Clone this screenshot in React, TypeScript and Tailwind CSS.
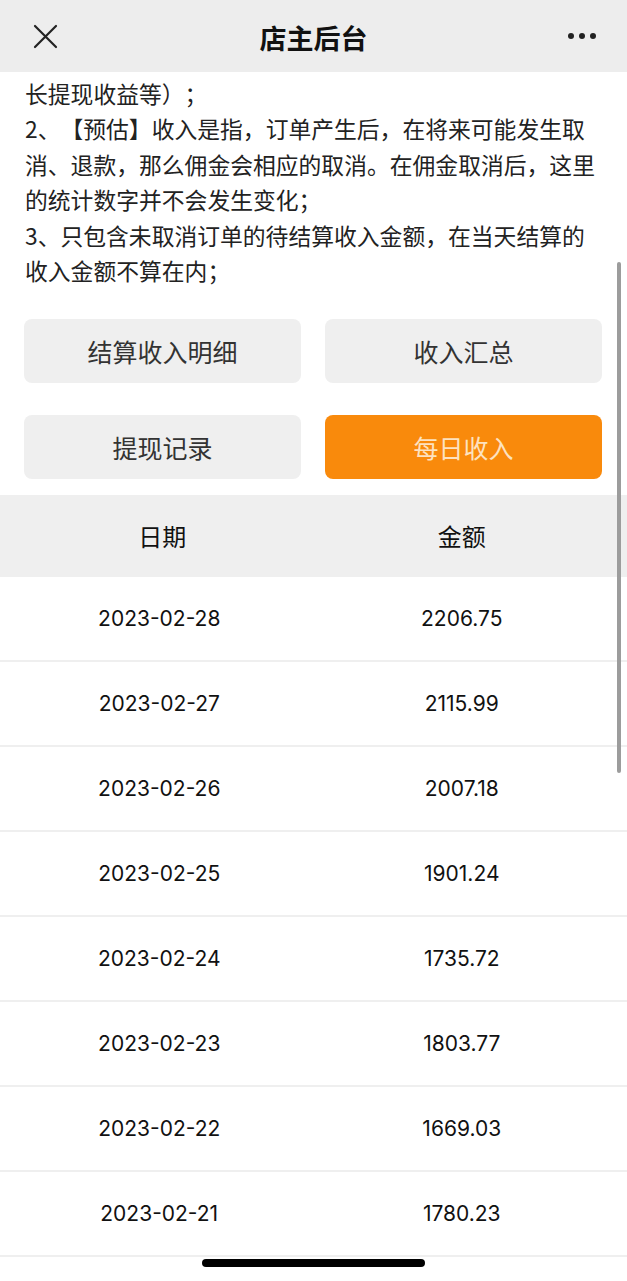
import React from "react";

const cjk = { fontFamily: '"Noto Sans CJK SC", "Noto Sans", sans-serif' };
const num = { fontFamily: 'Inter, "Noto Sans CJK SC", sans-serif' };

const rows: [string, string][] = [
  ["2023-02-28", "2206.75"],
  ["2023-02-27", "2115.99"],
  ["2023-02-26", "2007.18"],
  ["2023-02-25", "1901.24"],
  ["2023-02-24", "1735.72"],
  ["2023-02-23", "1803.77"],
  ["2023-02-22", "1669.03"],
  ["2023-02-21", "1780.23"],
];

export default function App() {
  return (
    <div className="relative w-[627px] h-[1281px] overflow-hidden bg-white" style={cjk}>
      {/* Nav bar */}
      <div className="h-[72px] bg-[#ededed] grid grid-cols-[1fr_auto_1fr] items-center">
        <div className="pl-[33px] flex items-center">
          <svg width="25" height="25" viewBox="0 0 25 25" fill="none">
            <path d="M2 2 L23 23 M23 2 L2 23" stroke="#222" strokeWidth="2.2" strokeLinecap="round" />
          </svg>
        </div>
        <div className="text-[27px] font-semibold text-[#111] leading-none pt-[2px]">店主后台</div>
        <div className="flex justify-end items-center pr-[31px] gap-[5px]">
          <span className="w-[6px] h-[6px] rounded-full bg-[#222]" />
          <span className="w-[6px] h-[6px] rounded-full bg-[#222]" />
          <span className="w-[6px] h-[6px] rounded-full bg-[#222]" />
        </div>
      </div>

      {/* Notes */}
      <div className="pt-[4px] px-[25px] text-[22.8px] leading-[35.4px] text-[#222] [text-spacing-trim:space-all]">
        <div className="whitespace-nowrap">长提现收益等）；</div>
        <div className="whitespace-nowrap">
          <span>2、</span>
          <span>【预估】</span>
          <span>收入是指，</span>
          <span>订单产生后，</span>
          <span>在将来</span>
          <span>可能发生取</span>
        </div>
        <div className="whitespace-nowrap">
          <span>消、退款，</span>
          <span>那么佣金会相应的取消。</span>
          <span>在佣金取消后，这里</span>
        </div>
        <div className="whitespace-nowrap">的统计数字并不会发生变化；</div>
        <div className="whitespace-nowrap">3、只包含未取消订单的待结算收入金额，在当天结算的</div>
        <div className="whitespace-nowrap">收入金额不算在内；</div>
      </div>

      {/* Buttons */}
      <div className="mt-[31px] pl-[24px] pr-[25px] grid grid-cols-2 gap-x-[24px] gap-y-[32px]">
        <div className="h-[64px] rounded-lg bg-[#efefef] flex items-center justify-center text-[25px] text-[#333]">
          结算收入明细
        </div>
        <div className="h-[64px] rounded-lg bg-[#efefef] flex items-center justify-center text-[25px] text-[#333]">
          收入汇总
        </div>
        <div className="h-[64px] rounded-lg bg-[#efefef] flex items-center justify-center text-[25px] text-[#333]">
          提现记录
        </div>
        <div className="h-[64px] rounded-lg bg-[#f98a0c] flex items-center justify-center text-[25px] text-[#fde2c0]">
          每日收入
        </div>
      </div>

      {/* Table */}
      <div className="mt-[16px]">
        <div className="h-[82px] bg-[#efefef] grid grid-cols-2 pl-[8px] pr-[14px] items-center text-[24px] text-[#111]">
          <div className="text-center pl-[6px]">日期</div>
          <div className="text-center">金额</div>
        </div>
        {rows.map(([d, a]) => (
          <div
            key={d}
            className="h-[85px] border-b-2 border-[#efefef] grid grid-cols-2 pl-[8px] pr-[14px] items-center text-[21px] text-[#111]"
            style={num}
          >
            <div className="text-center">{d}</div>
            <div className="text-center">{a}</div>
          </div>
        ))}
      </div>

      {/* Scroll indicator */}
      <div className="absolute left-[617px] top-[262px] w-[4px] h-[511px] rounded-full bg-[#9c9c9c]" />

      {/* Home indicator */}
      <div className="absolute left-[202px] bottom-[14px] w-[223px] h-[8px] rounded-full bg-black" />
    </div>
  );
}
